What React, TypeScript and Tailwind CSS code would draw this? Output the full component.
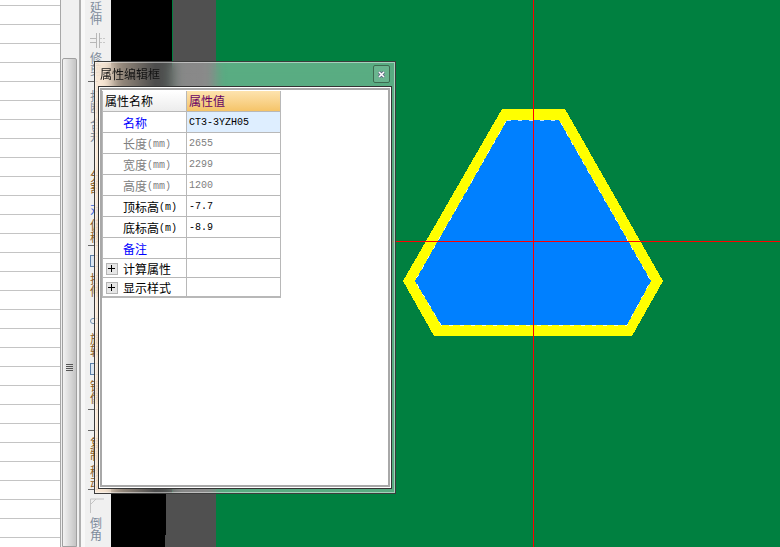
const cjk = "font-['Noto_Sans_CJK_SC','Liberation_Sans',sans-serif]";

const rows = [
  { label: "名称", unit: "", value: "CT3-3YZH05", tone: "text-[#0000ff]", valueTone: "text-black bg-[#deeeff]" },
  { label: "长度", unit: "(mm)", value: "2655", tone: "text-[#808080]", valueTone: "text-[#808080]" },
  { label: "宽度", unit: "(mm)", value: "2299", tone: "text-[#808080]", valueTone: "text-[#808080]" },
  { label: "高度", unit: "(mm)", value: "1200", tone: "text-[#808080]", valueTone: "text-[#808080]" },
  { label: "顶标高", unit: "(m)", value: "-7.7", tone: "text-black", valueTone: "text-black" },
  { label: "底标高", unit: "(m)", value: "-8.9", tone: "text-black", valueTone: "text-black" },
  { label: "备注", unit: "", value: "", tone: "text-[#0000ff]", valueTone: "" },
];

const groups = ["计算属性", "显示样式"];

const gray = "text-[#7f8c9c]";
const dark = "text-[#8a5a20]";

const tools = [
  { kind: "text", text: "延伸", h: "h-[32px]", tone: gray },
  { kind: "icon", h: "h-[19px]" },
  { kind: "text", text: "修剪", h: "h-[29px]", tone: gray },
  { kind: "tick", h: "h-[9px]" },
  { kind: "text", text: "打断", h: "h-[28px]", tone: gray },
  { kind: "text", text: "合并", h: "h-[52px]", tone: gray },
  { kind: "text", text: "分割", h: "h-[33px]", tone: dark },
  { kind: "text", text: "对", h: "h-[16px]", tone: "text-[#3366dd]" },
  { kind: "text", text: "偏移", h: "h-[26px]", tone: dark },
  { kind: "tick", h: "h-[10px]" },
  { kind: "box", h: "h-[18px]" },
  { kind: "text", text: "拉伸", h: "h-[45px]", tone: dark },
  { kind: "circle", h: "h-[15px]" },
  { kind: "text", text: "旋转", h: "h-[30px]", tone: dark },
  { kind: "box", h: "h-[17px]" },
  { kind: "text", text: "镜像", h: "h-[29px]", tone: dark },
  { kind: "tick", h: "h-[21px]" },
  { kind: "tick", h: "h-[7px]" },
  { kind: "text", text: "复制", h: "h-[28px]", tone: dark },
  { kind: "text", text: "移动", h: "h-[24px]", tone: dark },
  { kind: "tick", h: "h-[8px]" },
];

function PlusBox() {
  return (
    <span className="flex h-[12px] w-[12px] shrink-0 items-center justify-center border border-[#b4b4b4] bg-[#e6e6e6]">
      <svg width="8" height="8" viewBox="0 0 8 8" shapeRendering="crispEdges">
        <path d="M0 3.5H7M3.5 0V7" stroke="#000" fill="none" />
      </svg>
    </span>
  );
}

function ToolItem({ tool }: { tool: (typeof tools)[number] }) {
  if (tool.kind === "tick") {
    return (
      <div className={`${tool.h} shrink-0 pl-[3px]`}>
        <div className="h-px w-[10px] bg-[#666]" />
      </div>
    );
  }
  if (tool.kind === "icon") {
    return (
      <div className={`${tool.h} shrink-0 pl-[5px]`}>
        <svg width="16" height="15" viewBox="0 0 16 15" shapeRendering="crispEdges">
          <path d="M0 5.5H6M0 9.5H6M6.5 0V15M9.5 0V15" stroke="#b8b8b8" fill="none" />
          <path d="M10 5.5H15M10 9.5H15" stroke="#c8c8c8" strokeDasharray="2 1" fill="none" />
        </svg>
      </div>
    );
  }
  if (tool.kind === "box") {
    return (
      <div className={`${tool.h} shrink-0 pl-[5px]`}>
        <div className="h-[12px] w-[12px] border border-[#5b7fa8] bg-[#dbe6f2]" />
      </div>
    );
  }
  if (tool.kind === "circle") {
    return (
      <div className={`${tool.h} shrink-0 pl-[5px]`}>
        <div className="h-[6px] w-[12px] rounded-full border border-[#7090b0]" />
      </div>
    );
  }
  return (
    <div className={`${tool.h} shrink-0 pl-[5px]`}>
      <span className={`${cjk} block w-[12px] text-[12px] leading-[12px] ${tool.tone}`}>{tool.text}</span>
    </div>
  );
}

function PropertyDialog() {
  return (
    <div className="absolute left-[94px] top-[61px] flex h-[433px] w-[302px] flex-col border border-[#3c3c3c] bg-gradient-to-r from-[#ffe6cc]/70 from-[4%] via-white/30 via-[20%] to-white/35 to-[45%] px-[3px] pb-[4px] shadow-[inset_0_0_0_1px_rgba(255,255,255,0.45)] backdrop-blur-[6px]">
      <div className="flex h-[24px] shrink-0 items-center justify-between pl-[2px] pr-[2px]">
        <span className={`${cjk} text-[12px] text-[#141414]`}>属性编辑框</span>
        <button className="flex h-[18px] w-[17px] items-center justify-center rounded-[2px] border border-[#3d6b50] bg-white/10">
          <svg width="9" height="9" viewBox="0 0 9 9">
            <path d="M2 2L7 7M7 2L2 7" stroke="#5a5a80" strokeWidth="3" />
            <path d="M2 2L7 7M7 2L2 7" stroke="#fff" strokeWidth="1.6" />
          </svg>
        </button>
      </div>
      <div className="min-h-0 flex-1 border border-[#333] bg-white p-[1px]">
        <div className="h-full border-2 border-[#a8a8a8] bg-white pt-[1px]">
          <div className="w-[179px] border-x border-b border-[#b8b8b8]">
            <div className={`${cjk} flex h-[21px] border-b border-[#b8b8b8] text-[12px]`}>
              <div className="flex w-[84px] items-center border-r border-[#b8b8b8] bg-gradient-to-b from-white to-[#ececec] pl-[2px] text-black">属性名称</div>
              <div className="flex flex-1 items-center bg-gradient-to-b from-[#fde3ae] to-[#f5c468] pl-[2px] text-[#660066]">属性值</div>
            </div>
            {rows.map((r) => (
              <div key={r.label} className="flex h-[21px] border-b border-[#b8b8b8] text-[12px]">
                <div className={`${cjk} ${r.tone} flex w-[84px] items-center border-r border-[#b8b8b8] pl-[20px] pt-[1px]`}>
                  {r.label}
                  {r.unit && <span className="mt-[1px] font-['Liberation_Mono',monospace] text-[10px]">{r.unit}</span>}
                </div>
                <div className={`${r.valueTone} flex flex-1 items-center pl-[2px] font-['Liberation_Mono',monospace] text-[10px]`}>{r.value}</div>
              </div>
            ))}
            {groups.map((g) => (
              <div key={g} className="flex h-[19px] border-b border-[#b8b8b8] text-[12px]">
                <div className={`${cjk} flex w-[84px] items-center gap-[5px] border-r border-[#b8b8b8] pl-[3px] pt-[1px] text-black`}>
                  <PlusBox />
                  {g}
                </div>
                <div className="flex-1" />
              </div>
            ))}
          </div>
        </div>
      </div>
    </div>
  );
}

export default function App() {
  return (
    <div className="relative flex h-[547px] w-[780px] overflow-hidden bg-[#f0f0f0]">
      {/* list */}
      <div className="flex h-full w-[61px] shrink-0 flex-col overflow-hidden border-r border-[#a8a8a8] bg-white">
        <div className="h-[6px] shrink-0 border-b border-[#c4c4c4]" />
        {Array.from({ length: 28 }).map((_, i) => (
          <div key={i} className="h-[19px] shrink-0 border-b border-[#c4c4c4]" />
        ))}
      </div>

      {/* scrollbar */}
      <div className="flex h-full w-[18px] shrink-0 flex-col bg-[#f0f0f0] pl-[1px] pr-[2px] pt-[58px]">
        <div className="flex flex-1 items-start justify-center rounded-t-[2px] border border-[#a0a0a0] bg-gradient-to-r from-[#f2f2f2] to-[#c4c4c4] pt-[305px]">
          <div className="flex w-[7px] flex-col gap-[1px]">
            <span className="h-px bg-[#555]" />
            <span className="h-px bg-[#555]" />
            <span className="h-px bg-[#555]" />
            <span className="h-px bg-[#555]" />
          </div>
        </div>
      </div>
      <div className="h-full w-[2px] shrink-0 bg-[#b0b0b0]" />
      <div className="h-full w-[4px] shrink-0 bg-[#f8f8f8]" />

      {/* tool strip */}
      <div className="flex h-full w-[26px] shrink-0 flex-col bg-[#f0f0f0] pt-[1px]">
        <div className="flex flex-1 flex-col">
          {tools.map((t, i) => (
            <ToolItem key={i} tool={t} />
          ))}
        </div>
        <div className="flex h-[49px] shrink-0 flex-col pl-[5px]">
          <svg width="16" height="16" viewBox="0 0 16 16" className="shrink-0">
            <path d="M0.5 15V1H14M1 6L6 1" stroke="#c4c4c4" fill="none" />
          </svg>
          <span className={`${cjk} mt-[3px] w-[12px] text-[12px] leading-[12px] text-[#7f8c9c]`}>倒角</span>
        </div>
      </div>

      {/* black and grey columns */}
      <div className="flex h-full w-[105px] shrink-0 flex-col">
        <div className="flex flex-1">
          <div className="w-[61px] bg-black" />
          <div className="w-px bg-[#008040]" />
          <div className="flex-1 bg-[#505050]" />
        </div>
        <div className="flex h-[41px] shrink-0">
          <div className="w-[55px] bg-black" />
          <div className="flex-1 bg-[#505050]" />
        </div>
        <div className="flex h-[12px] shrink-0">
          <div className="w-[54px] bg-black" />
          <div className="flex-1 bg-[#505050]" />
        </div>
      </div>

      {/* canvas */}
      <div className="relative h-full flex-1 bg-[#008040]">
        <svg width="564" height="547" viewBox="216 0 564 547" className="absolute inset-0" shapeRendering="crispEdges">
          <polygon points="502,109 565,109 663,281 632,336 434,336 403,281" fill="#ffff00" />
          <polygon points="507,120 559,120 651,281 627,325 441,325 415,281" fill="#0080ff" />
          <polygon points="507,120 559,120 651,281 627,325 441,325 415,281" fill="none" stroke="#fff" strokeWidth="0.8" strokeDasharray="4 7" />
          <path d="M216 241.5H780M533.5 0V547" stroke="#ff0000" strokeWidth="1" />
        </svg>
      </div>

      <PropertyDialog />
    </div>
  );
}
